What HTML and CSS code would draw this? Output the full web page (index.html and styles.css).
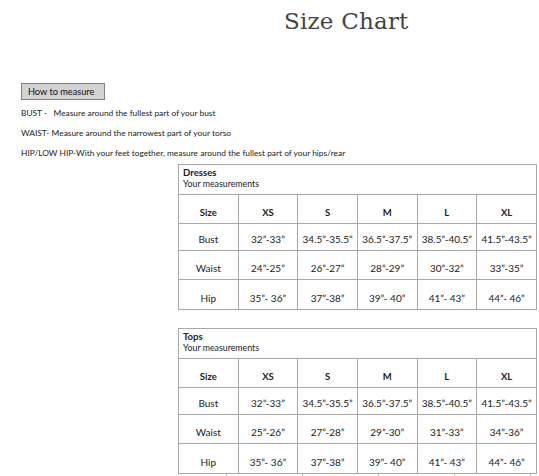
FILE: index.html
```html
<!DOCTYPE html>
<html>
<head>
<meta charset="utf-8">
<link rel="stylesheet" href="styles.css">
</head>
<body>
<div class="page">
  <h1 class="title">Size Chart</h1>
  <div class="howto">How to measure</div>
  <p class="line">BUST -&nbsp;&nbsp; Measure around the fullest part of your bust</p>
  <p class="line">WAIST- Measure around the narrowest part of your torso</p>
  <p class="line">HIP/LOW HIP-With your feet together, measure around the fullest part of your hips/rear</p>

  <table class="chart">
    <tr class="head"><td colspan="6"><b>Dresses</b><br>Your measurements</td></tr>
    <tr class="sizes"><th>Size</th><th>XS</th><th>S</th><th>M</th><th>L</th><th>XL</th></tr>
    <tr class="r1"><td>Bust</td><td>32”-33”</td><td>34.5”-35.5”</td><td>36.5”-37.5”</td><td>38.5”-40.5”</td><td>41.5”-43.5”</td></tr>
    <tr class="r2"><td>Waist</td><td>24”-25”</td><td>26”-27”</td><td>28”-29”</td><td>30”-32”</td><td>33”-35”</td></tr>
    <tr class="r3"><td>Hip</td><td>35”- 36”</td><td>37”-38”</td><td>39”- 40”</td><td>41”- 43”</td><td>44”- 46”</td></tr>
  </table>

  <table class="chart second">
    <tr class="head"><td colspan="6"><b>Tops</b><br>Your measurements</td></tr>
    <tr class="sizes s2"><th>Size</th><th>XS</th><th>S</th><th>M</th><th>L</th><th>XL</th></tr>
    <tr class="r1 t1"><td>Bust</td><td>32”-33”</td><td>34.5”-35.5”</td><td>36.5”-37.5”</td><td>38.5”-40.5”</td><td>41.5”-43.5”</td></tr>
    <tr class="r2"><td>Waist</td><td>25”-26”</td><td>27”-28”</td><td>29”-30”</td><td>31”-33”</td><td>34”-36”</td></tr>
    <tr class="r3"><td>Hip</td><td>35”- 36”</td><td>37”-38”</td><td>39”- 40”</td><td>41”- 43”</td><td>44”- 46”</td></tr>
  </table>

  <div class="ticks"><span></span><span></span><span></span><span></span><span></span></div>
</div>
</body>
</html>
```

FILE: styles.css
```css
html, body {
  margin: 0;
  padding: 0;
  background: #ffffff;
}
.page {
  width: 539px;
  height: 476px;
  overflow: hidden;
  font-family: Lato, "Open Sans", sans-serif;
  color: #222;
}
.title {
  margin: 0;
  padding: 6px 0 0 284px;
  height: 83px;
  box-sizing: border-box;
  font-family: "DejaVu Serif", serif;
  font-weight: normal;
  font-size: 23px;
  line-height: 30px;
  color: #444;
  letter-spacing: 0.2px;
}
.howto {
  margin-left: 21px;
  width: 84px;
  height: 17px;
  box-sizing: border-box;
  background: #d3d3d3;
  border: 1px solid #808080;
  font-size: 9.2px;
  line-height: 15px;
  padding-left: 6px;
  color: #111;
}
.line {
  margin: 0 0 0 21px;
  font-size: 8.4px;
  line-height: 20px;
  height: 20px;
  color: #222;
}
.line:first-of-type { margin-top: 3px; }
.chart {
  border-collapse: collapse;
  table-layout: fixed;
  width: 359px;
  margin-left: 178px;
  margin-top: 1px;
  font-size: 10px;
  color: #222;
}
.chart td, .chart th {
  border: 1px solid #a8a8a8;
  width: 59px;
  text-align: center;
  vertical-align: bottom;
  padding: 0 0 5px 0;
  white-space: nowrap;
}
.chart th { font-weight: bold; font-size: 9.5px; }
.chart .head td {
  text-align: left;
  vertical-align: top;
  height: 30px;
  padding: 2px 4px 0;
  font-size: 8.8px;
  line-height: 11px;
  box-sizing: border-box;
}
.chart .head b { font-size: 9.6px; }
.chart tr.sizes th { height: 29px; box-sizing: border-box; }
.chart tr.r1 td { height: 27px; box-sizing: border-box; }
.chart tr.r2 td { height: 29px; box-sizing: border-box; }
.chart tr.r3 td { height: 30px; box-sizing: border-box; }
.second { margin-top: 18px; }
.chart .s2 th { height: 27px; }
.chart .t1 td { height: 27px; }
.ticks {
  display: flex;
  gap: 75px;
  margin-left: 226px;
  height: 5px;
}
.ticks span {
  width: 1px;
  height: 5px;
  background: #c0c0c0;
}
```
